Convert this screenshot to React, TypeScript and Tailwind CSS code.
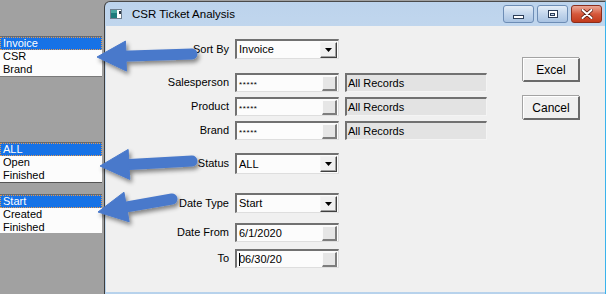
import React from 'react';

type Pt = [number, number];

// blue callout arrows drawn over the screenshot
function arrowShape(tail: Pt, tip: Pt) {
  const dx = tip[0] - tail[0];
  const dy = tip[1] - tail[1];
  const len = Math.hypot(dx, dy);
  const ux = dx / len;
  const uy = dy / len;
  const nx = -uy;
  const ny = ux;
  const headLen = 29;
  const headW = 15;
  const bx = tip[0] - ux * headLen;
  const by = tip[1] - uy * headLen;
  const head = [
    [tip[0], tip[1]],
    [bx + nx * headW, by + ny * headW],
    [bx - nx * headW, by - ny * headW],
  ]
    .map((p) => p.join(','))
    .join(' ');
  return { head, shaft: { x1: tail[0], y1: tail[1], x2: bx + ux * 4, y2: by + uy * 4 } };
}

const arrows: { tail: Pt; tip: Pt }[] = [
  { tail: [192, 54], tip: [97, 57] },
  { tail: [192, 161], tip: [100, 166] },
  { tail: [172, 199], tip: [98, 212] },
];

function ListBox({ items, className }: { items: string[]; className: string }) {
  return (
    <div className={`w-[102px] bg-[#fcfcfc] ${className}`}>
      {items.map((t, i) =>
        i === 0 ? (
          <div
            key={t}
            className="h-[13px] border border-dotted border-[#e49a52] bg-[#1672e6] pl-[2px] leading-[11px] text-white"
          >
            {t}
          </div>
        ) : (
          <div key={t} className="h-[13px] pl-[3px] leading-[13px] text-black">
            {t}
          </div>
        ),
      )}
    </div>
  );
}

function SmallButton() {
  return (
    <div className="mr-[1px] h-[15px] w-[15px] shrink-0 border-t border-l border-r-2 border-b-2 border-t-[#fbfbfb] border-l-[#fbfbfb] border-r-[#7d7d7d] border-b-[#7d7d7d] bg-[#e6e6e6]" />
  );
}

function TextBox({ value, stars, caret }: { value: string; stars?: boolean; caret?: boolean }) {
  return (
    <div className="flex h-[19px] w-[104px] items-center border-t-2 border-l-2 border-r border-b border-t-[#717171] border-l-[#717171] border-r-[#dedede] border-b-[#dedede] bg-[#fcfcfc]">
      <div className="flex flex-1 items-center pl-[2px]">
        {caret && <span className="mr-[-1px] h-[13px] w-[1px] bg-black" />}
        {stars ? (
          <span className="translate-y-[2px] text-[8px] leading-none tracking-[0.6px]">{value}</span>
        ) : (
          <span className="leading-none">{value}</span>
        )}
      </div>
      <SmallButton />
    </div>
  );
}

function ReadBox({ value }: { value: string }) {
  return (
    <div className="flex h-[19px] w-[142px] items-center border-t-2 border-l-2 border-r border-b border-t-[#717171] border-l-[#717171] border-r-[#f4f4f4] border-b-[#f4f4f4] bg-[#e3e3e3] pl-[1px]">
      {value}
    </div>
  );
}

function Combo({ value, tall }: { value: string; tall?: boolean }) {
  return (
    <div
      className={`flex w-[104px] items-center border-t-2 border-l-2 border-r border-b border-t-[#717171] border-l-[#717171] border-r-[#dedede] border-b-[#dedede] bg-[#fcfcfc] ${
        tall ? 'h-[21px]' : 'h-[20px]'
      }`}
    >
      <span className="flex-1 pl-[2px]">{value}</span>
      <div className="mr-[1px] flex h-[16px] w-[17px] items-center justify-center border-t border-l border-r border-b border-t-[#f4f4f4] border-l-[#f4f4f4] border-r-[#404040] border-b-[#404040] bg-[#f0f0f0] shadow-[inset_-1px_-1px_0_#a0a0a0]">
        <svg width="7" height="4" viewBox="0 0 7 4">
          <path d="M0 0h7L3.5 4z" fill="#000" />
        </svg>
      </div>
    </div>
  );
}

function Row({ label, mt, children }: { label: string; mt: string; children: React.ReactNode }) {
  return (
    <div className={`flex items-center gap-[6px] ${mt}`}>
      <div className="w-[123px] text-right">{label}</div>
      {children}
    </div>
  );
}

function PushButton({ label }: { label: string }) {
  return (
    <div className="flex h-[24px] w-[57px] items-center justify-center border-t border-l border-r-2 border-b-2 border-t-white border-l-white border-r-[#6a6a6a] border-b-[#6a6a6a] bg-[#f0f0f0] text-[12px] shadow-[-1px_-1px_0_#a3a3a3]">
      {label}
    </div>
  );
}

function CaptionButton({ kind }: { kind: 'min' | 'max' | 'close' }) {
  if (kind === 'close') {
    return (
      <div className="flex h-[18px] w-[31px] items-center justify-center rounded-[3px] border border-[#8a2d1c] bg-linear-to-b from-[#e9a797] via-[#d6583b] to-[#c23a1b]">
        <svg width="12" height="10" viewBox="0 0 12 10">
          <path d="M1.5 1l9 8M10.5 1l-9 8" stroke="#5a1c10" strokeWidth="3.6" strokeLinecap="round" />
          <path d="M1.5 1l9 8M10.5 1l-9 8" stroke="#fff" strokeWidth="2" strokeLinecap="round" />
        </svg>
      </div>
    );
  }
  return (
    <div className="flex h-[18px] w-[31px] items-center justify-center rounded-[3px] border border-[#6d8db5] bg-linear-to-b from-[#e4edf7] via-[#c3d6ec] to-[#a9c3e2]">
      {kind === 'min' ? (
        <div className="mt-[5px] h-[4px] w-[11px] border border-[#2c3e58] bg-white" />
      ) : (
        <div className="flex h-[8px] w-[10px] items-center justify-center border border-[#2c3e58] bg-white">
          <div className="h-[3px] w-[5px] border border-[#2c3e58] bg-[#c3d6ec]" />
        </div>
      )}
    </div>
  );
}

export default function App() {
  return (
    <div className="relative flex h-[294px] w-[606px] overflow-hidden bg-[#a1a1a1] font-['Liberation_Sans',Arial,sans-serif] text-[11px] text-black">
      {/* background lists */}
      <div className="flex w-[104px] shrink-0 flex-col">
        <ListBox items={['Invoice', 'CSR', 'Brand']} className="mt-[36px] h-[41px] border-t border-b border-t-[#6a6a6a] border-b-[#7a7a7a]" />
        <ListBox items={['ALL', 'Open', 'Finished']} className="mt-[65px] h-[41px] border-t border-b border-t-[#6a6a6a] border-b-[#555]" />
        <ListBox items={['Start', 'Created', 'Finished']} className="mt-[11px] h-[39px] overflow-hidden border-t border-t-[#6a6a6a]" />
      </div>

      {/* dialog window */}
      <div className="mt-[1px] flex flex-1 flex-col rounded-tl-[6px] border-t border-l border-r border-t-[#4a4a4a] border-l-[#3e3e3e] border-r-[#39b3ec] bg-linear-to-b from-[#bcd3ec] via-[#d6e5f4] to-[#b7d2ec]">
        <div className="flex h-[24px] shrink-0 items-start">
          <div className="mt-[7px] ml-[5px]">
            <svg width="12" height="10" viewBox="0 0 12 10">
              <rect x="0.5" y="0.5" width="11" height="9" fill="#fff" stroke="#6f7f8f" />
              <rect x="1" y="1" width="6" height="8" fill="#1d7b7c" />
              <rect x="1" y="1" width="6" height="3" fill="#49a7a0" />
              <rect x="9" y="2" width="2" height="3" fill="#2d3a48" />
            </svg>
          </div>
          <div className="mt-[5px] ml-[10px] text-[11.5px] leading-[14px] text-black">CSR Ticket Analysis</div>
          <div className="mt-[3px] mr-[3px] ml-auto flex gap-[3px]">
            <CaptionButton kind="min" />
            <CaptionButton kind="max" />
            <CaptionButton kind="close" />
          </div>
        </div>

        <div className="mb-[2px] ml-[1px] flex flex-1 bg-[#f0f0f0]">
          <div className="flex flex-col pt-[13px]">
            <Row label="Sort By" mt="mt-0">
              <Combo value="Invoice" />
            </Row>
            <Row label="Salesperson" mt="mt-[14px]">
              <TextBox value="*****" stars />
              <ReadBox value="All Records" />
            </Row>
            <Row label="Product" mt="mt-[5px]">
              <TextBox value="*****" stars />
              <ReadBox value="All Records" />
            </Row>
            <Row label="Brand" mt="mt-[5px]">
              <TextBox value="*****" stars />
              <ReadBox value="All Records" />
            </Row>
            <Row label="Status" mt="mt-[13px]">
              <Combo value="ALL" tall />
            </Row>
            <Row label="Date Type" mt="mt-[19px]">
              <Combo value="Start" />
            </Row>
            <Row label="Date From" mt="mt-[10px]">
              <TextBox value="6/1/2020" />
            </Row>
            <Row label="To" mt="mt-[7px]">
              <TextBox value="06/30/20" caret />
            </Row>
          </div>
          <div className="mt-[32px] ml-[36px] flex flex-col gap-[14px]">
            <PushButton label="Excel" />
            <PushButton label="Cancel" />
          </div>
        </div>
      </div>

      {/* callout arrows */}
      <svg className="pointer-events-none absolute inset-0" width="606" height="294" viewBox="0 0 606 294">
        <defs>
          <filter id="shadow" x="-20%" y="-40%" width="140%" height="180%">
            <feDropShadow dx="2" dy="3" stdDeviation="2" floodColor="#000" floodOpacity="0.45" />
          </filter>
        </defs>
        {arrows.map((a, i) => {
          const s = arrowShape(a.tail, a.tip);
          return (
            <g key={i} filter="url(#shadow)" fill="#4a79cb" stroke="#4a79cb">
              <line {...s.shaft} strokeWidth="11" strokeLinecap="round" />
              <polygon points={s.head} strokeWidth="1" strokeLinejoin="round" />
            </g>
          );
        })}
      </svg>
    </div>
  );
}
